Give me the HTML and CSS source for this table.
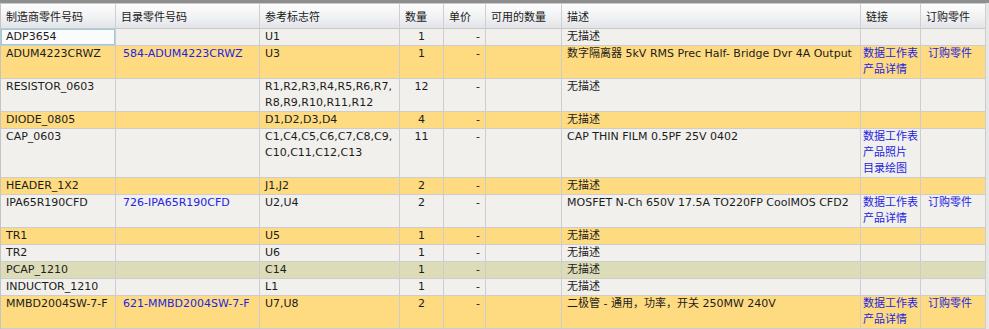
FILE: index.html
```html
<!DOCTYPE html>
<html lang="zh">
<head>
<meta charset="utf-8">
<title>BOM</title>
<link rel="stylesheet" href="styles.css">
</head>
<body>
<div class="topbar"></div>
<table class="bom">
  <colgroup>
    <col class="c1"><col class="c2"><col class="c3"><col class="c4"><col class="c5"><col class="c6"><col class="c7"><col class="c8"><col class="c9">
  </colgroup>
  <thead>
    <tr>
      <th>制造商零件号码</th>
      <th>目录零件号码</th>
      <th>参考标志符</th>
      <th>数量</th>
      <th>单价</th>
      <th>可用的数量</th>
      <th>描述</th>
      <th>链接</th>
      <th>订购零件</th>
    </tr>
  </thead>
  <tbody>
    <tr class="light">
      <td class="focus">ADP3654</td><td></td><td>U1</td><td class="qty">1</td><td class="price">-</td><td></td><td>无描述</td><td></td><td></td>
    </tr>
    <tr class="yellow">
      <td>ADUM4223CRWZ</td><td class="lk">584-ADUM4223CRWZ</td><td>U3</td><td class="qty">1</td><td class="price">-</td><td></td><td class="desc">数字隔离器 5kV RMS Prec Half- Bridge Dvr 4A Output</td><td class="links"><span>数据工作表</span><span>产品详情</span></td><td class="lk">订购零件</td>
    </tr>
    <tr class="light">
      <td>RESISTOR_0603</td><td></td><td>R1,R2,R3,R4,R5,R6,R7,<br>R8,R9,R10,R11,R12</td><td class="qty">12</td><td class="price">-</td><td></td><td>无描述</td><td></td><td></td>
    </tr>
    <tr class="yellow">
      <td>DIODE_0805</td><td></td><td>D1,D2,D3,D4</td><td class="qty">4</td><td class="price">-</td><td></td><td>无描述</td><td></td><td></td>
    </tr>
    <tr class="light">
      <td>CAP_0603</td><td></td><td>C1,C4,C5,C6,C7,C8,C9,<br>C10,C11,C12,C13</td><td class="qty">11</td><td class="price">-</td><td></td><td class="desc">CAP THIN FILM 0.5PF 25V 0402</td><td class="links"><span>数据工作表</span><span>产品照片</span><span>目录绘图</span></td><td></td>
    </tr>
    <tr class="yellow">
      <td>HEADER_1X2</td><td></td><td>J1,J2</td><td class="qty">2</td><td class="price">-</td><td></td><td>无描述</td><td></td><td></td>
    </tr>
    <tr class="light">
      <td>IPA65R190CFD</td><td class="lk">726-IPA65R190CFD</td><td>U2,U4</td><td class="qty">2</td><td class="price">-</td><td></td><td class="desc">MOSFET N-Ch 650V 17.5A TO220FP CoolMOS CFD2</td><td class="links"><span>数据工作表</span><span>产品详情</span></td><td class="lk">订购零件</td>
    </tr>
    <tr class="yellow">
      <td>TR1</td><td></td><td>U5</td><td class="qty">1</td><td class="price">-</td><td></td><td>无描述</td><td></td><td></td>
    </tr>
    <tr class="light">
      <td>TR2</td><td></td><td>U6</td><td class="qty">1</td><td class="price">-</td><td></td><td>无描述</td><td></td><td></td>
    </tr>
    <tr class="olive">
      <td>PCAP_1210</td><td></td><td>C14</td><td class="qty">1</td><td class="price">-</td><td></td><td>无描述</td><td></td><td></td>
    </tr>
    <tr class="light">
      <td>INDUCTOR_1210</td><td></td><td>L1</td><td class="qty">1</td><td class="price">-</td><td></td><td>无描述</td><td></td><td></td>
    </tr>
    <tr class="yellow">
      <td>MMBD2004SW-7-F</td><td class="lk">621-MMBD2004SW-7-F</td><td>U7,U8</td><td class="qty">2</td><td class="price">-</td><td></td><td class="desc">二极管 - 通用，功率，开关 250MW 240V</td><td class="links"><span>数据工作表</span><span>产品详情</span></td><td class="lk">订购零件</td>
    </tr>
  </tbody>
</table>
</body>
</html>
```

FILE: styles.css
```css
html, body {
  margin: 0;
  padding: 0;
  background: #e7e7e7;
  overflow: hidden;
}

body {
  font-family: "DejaVu Sans", "Noto Sans CJK SC", sans-serif;
  font-size: 11px;
  color: #1c1c1c;
}

.topbar {
  height: 3px;
  background: #8e8e8e;
}

.bom {
  width: 986px;
  table-layout: fixed;
  border-collapse: separate;
  border-spacing: 0;
  border-left: 1px solid #c4c4c4;
}

.c1 { width: 115px; }
.c2 { width: 144px; }
.c3 { width: 140px; }
.c4 { width: 44px; }
.c5 { width: 42px; }
.c6 { width: 76px; }
.c7 { width: 299px; }
.c8 { width: 60px; }
.c9 { width: 65px; }

.bom th {
  box-sizing: border-box;
  height: 26px;
  padding: 0 5px;
  text-align: left;
  font-weight: normal;
  color: #1a1a1a;
  vertical-align: middle;
  white-space: nowrap;
  background: linear-gradient(#fdfdfd, #f3f4f5 45%, #e2e4e8);
  border-top: 1px solid #c9c9c9;
  border-bottom: 1px solid #c8c8c8;
  border-right: 1px solid #cfcfcf;
}

.bom td {
  padding: 0 5px;
  line-height: 16px;
  vertical-align: top;
  white-space: nowrap;
  overflow: visible;
  border-right: 1px solid #cdcdcd;
  border-bottom: 1px solid #cdcdcd;
}

.light td { background: #f1f0ec; }
.yellow td { background: #fedb81; }
.olive td { background: #dcdcb9; }

.bom td.focus {
  background: #fbfbfb;
  box-shadow: inset 0 0 0 1px #95cbe3;
}

.qty { text-align: center; }
.price { text-align: right; }

.lk {
  color: #2424e0;
}
.bom td.lk { padding-left: 7px; }

.links {
  color: #2424e0;
}
.bom td.links { padding-left: 2px; padding-right: 0; }
.links span { display: block; }

.desc { letter-spacing: 0; }
```
